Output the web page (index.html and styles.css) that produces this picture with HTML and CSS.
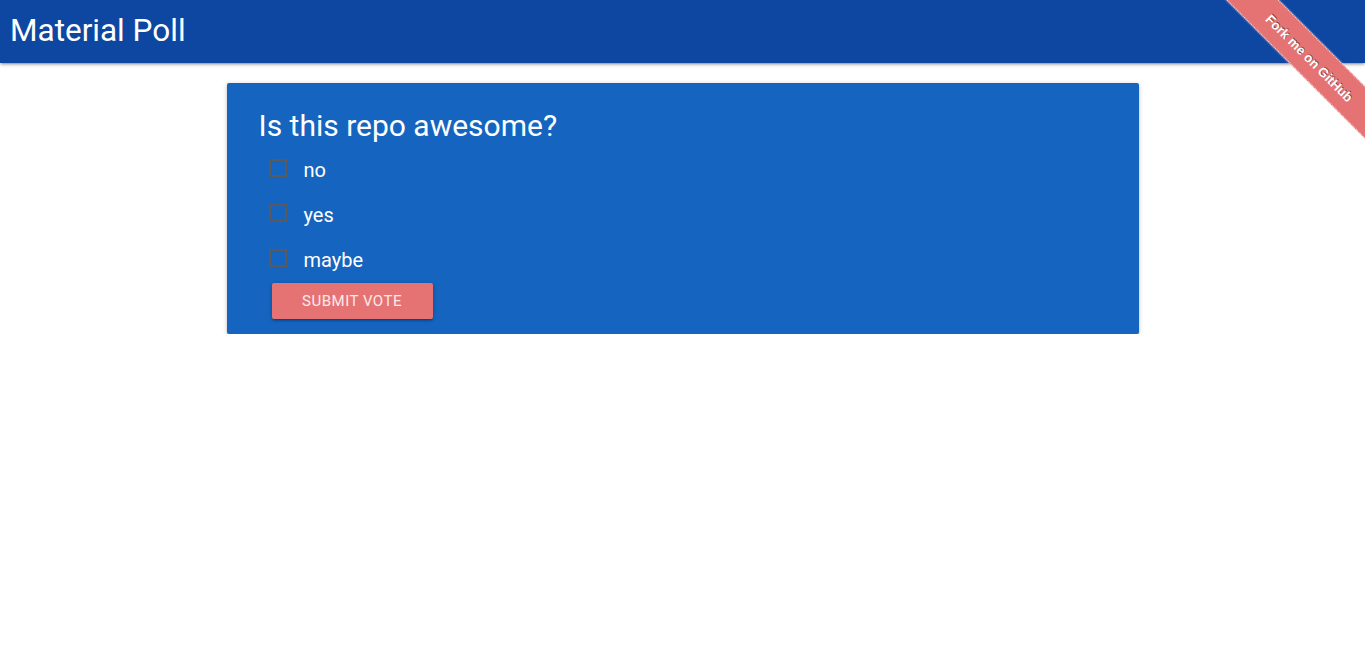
FILE: index.html
```html
<!DOCTYPE html>
<html lang="en">

<head>
  <meta charset="UTF-8">
  <meta name="viewport" content="width=device-width, initial-scale=1.0">
  <title>Material Poll</title>

  <link rel="stylesheet" href="styles.css">

</head>

<body>
  <nav class="navbar">
    <a href="#" class="brand">Material Poll</a>
  </nav>

  <div class="ribbon-wrap">
    <a href="#" class="ribbon">Fork me on GitHub</a>
  </div>

  <div class="container">
    <form class="card">
      <h4 class="pertanyaan">Is this repo awesome?</h4>

      <label class="pilihan">
        <input type="checkbox" name="no">
        <span class="kotak"></span>
        no
      </label>
      <label class="pilihan">
        <input type="checkbox" name="yes">
        <span class="kotak"></span>
        yes
      </label>
      <label class="pilihan">
        <input type="checkbox" name="maybe">
        <span class="kotak"></span>
        maybe
      </label>

      <button type="button" class="tombol">Submit vote</button>
    </form>
  </div>
</body>

</html>
```

FILE: styles.css
```css
body {
  margin: 0;
  font-family: Roboto, "Liberation Sans", sans-serif;
  background-color: #fff;
  overflow-x: hidden;
}

.navbar {
  height: 63px;
  background-color: #0d47a1;
  display: flex;
  align-items: center;
  padding: 0 10px;
  box-shadow: 0 2px 2px 0 rgba(0, 0, 0, .14), 0 3px 1px -2px rgba(0, 0, 0, .12), 0 1px 5px 0 rgba(0, 0, 0, .2);
}

.brand {
  color: #fff;
  font-size: 31.5px;
  text-decoration: none;
  padding-bottom: 2px;
}

.container {
  width: 912px;
  margin: 20px auto 0;
}

.card {
  background-color: #1565c0;
  border-radius: 2px;
  padding: 24px 32px 15px;
  box-shadow: 0 2px 2px 0 rgba(0, 0, 0, .14), 0 3px 1px -2px rgba(0, 0, 0, .12), 0 1px 5px 0 rgba(0, 0, 0, .2);
  color: #fff;
}

.pertanyaan {
  font-size: 30px;
  font-weight: 400;
  margin: 0 0 10px;
  line-height: 38px;
}

.pilihan {
  display: flex;
  align-items: center;
  height: 45px;
  margin-left: 10px;
  font-size: 20px;
  cursor: pointer;
  margin-top: -8px;
}

.pilihan + .pilihan {
  margin-top: 0;
}

.pilihan input {
  display: none;
}

.kotak {
  width: 14px;
  height: 14px;
  border: 2px solid #5a5a5a;
  margin-right: 17px;
  margin-top: -3px;
}

.tombol {
  display: block;
  margin: 1px 0 0 13px;
  width: 161px;
  height: 36px;
  border: none;
  border-radius: 2px;
  background-color: #e57373;
  color: #fdeaea;
  font-family: Roboto, "Liberation Sans", sans-serif;
  font-size: 15px;
  letter-spacing: .5px;
  text-transform: uppercase;
  box-shadow: 0 2px 2px 0 rgba(0, 0, 0, .14), 0 3px 1px -2px rgba(0, 0, 0, .12), 0 1px 5px 0 rgba(0, 0, 0, .2);
  cursor: pointer;
}

.ribbon-wrap {
  position: absolute;
  top: 0;
  right: 0;
  width: 150px;
  height: 150px;
  overflow: hidden;
}

.ribbon {
  position: absolute;
  left: -55px;
  top: 39px;
  width: 300px;
  height: 37px;
  line-height: 37px;
  box-sizing: border-box;
  transform: rotate(45deg);
  background-color: #e57373;
  color: #fff;
  font-family: "Liberation Sans", Arial, sans-serif;
  font-size: 13px;
  font-weight: bold;
  text-align: center;
  text-decoration: none;
  text-shadow: 0 -1px rgba(0, 0, 0, .5);
  border-top: 1px dotted rgba(255, 255, 255, .7);
  border-bottom: 1px dotted rgba(255, 255, 255, .7);
  box-shadow: 0 0 2px rgba(255, 255, 255, .8);
}
```
